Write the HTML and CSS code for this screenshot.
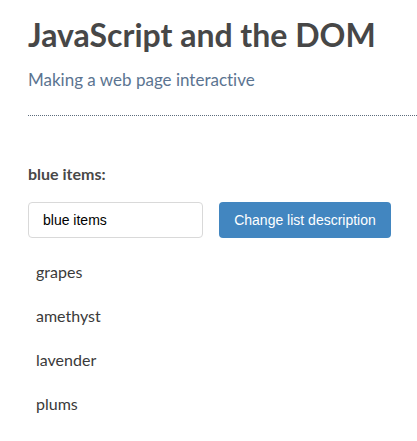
FILE: index.html
```html
<!DOCTYPE html>
<html>
<head>
<meta charset="utf-8">
<link rel="stylesheet" href="styles.css">
</head>
<body>
<div class="page">
  <header class="header">
    <h1 class="title">JavaScript and the DOM</h1>
    <p class="subtitle">Making a web page interactive</p>
  </header>
  <p class="list-label">blue items:</p>
  <div class="controls">
    <input class="desc-input" type="text" value="blue items">
    <button class="desc-button">Change list description</button>
  </div>
  <ul class="items">
    <li>grapes</li>
    <li>amethyst</li>
    <li>lavender</li>
    <li>plums</li>
  </ul>
</div>
</body>
</html>
```
FILE: styles.css
```css
html, body {
  margin: 0;
  padding: 0;
  background: #fff;
}
body {
  font-family: Lato, "Open Sans", sans-serif;
  font-variant-ligatures: none;
  color: #484848;
}
.page {
  padding: 13px 0 0 28px;
}
.header {
  border-bottom: 1px dotted #5d6c7c;
  padding-bottom: 23px;
}
.title {
  margin: 0;
  font-size: 32px;
  font-weight: 700;
  line-height: 44px;
  color: #474747;
}
.subtitle {
  margin: 11px 0 0;
  font-size: 17px;
  line-height: 24px;
  color: #5b7491;
}
.list-label {
  margin: 48px 0 0;
  font-size: 16px;
  font-weight: 700;
  line-height: 20px;
  color: #484848;
}
.controls {
  display: flex;
  align-items: center;
  gap: 16px;
  margin-top: 18px;
}
.desc-input {
  box-sizing: border-box;
  width: 175px;
  height: 36px;
  border: 1px solid #d9d9d9;
  border-radius: 4px;
  padding: 0 14px;
  font-family: "Liberation Sans", Arial, sans-serif;
  font-size: 14px;
  color: #000;
  outline: none;
}
.desc-button {
  box-sizing: border-box;
  width: 172px;
  height: 36px;
  border: none;
  border-radius: 4px;
  background: #4286c0;
  color: #fff;
  font-family: "Liberation Sans", Arial, sans-serif;
  font-size: 14px;
  padding: 0;
}
.items {
  list-style: none;
  margin: 24px 0 0;
  padding: 0 0 0 8px;
}
.items li {
  font-size: 16px;
  line-height: 20px;
  margin-bottom: 24px;
  color: #3a3a3a;
}
```
